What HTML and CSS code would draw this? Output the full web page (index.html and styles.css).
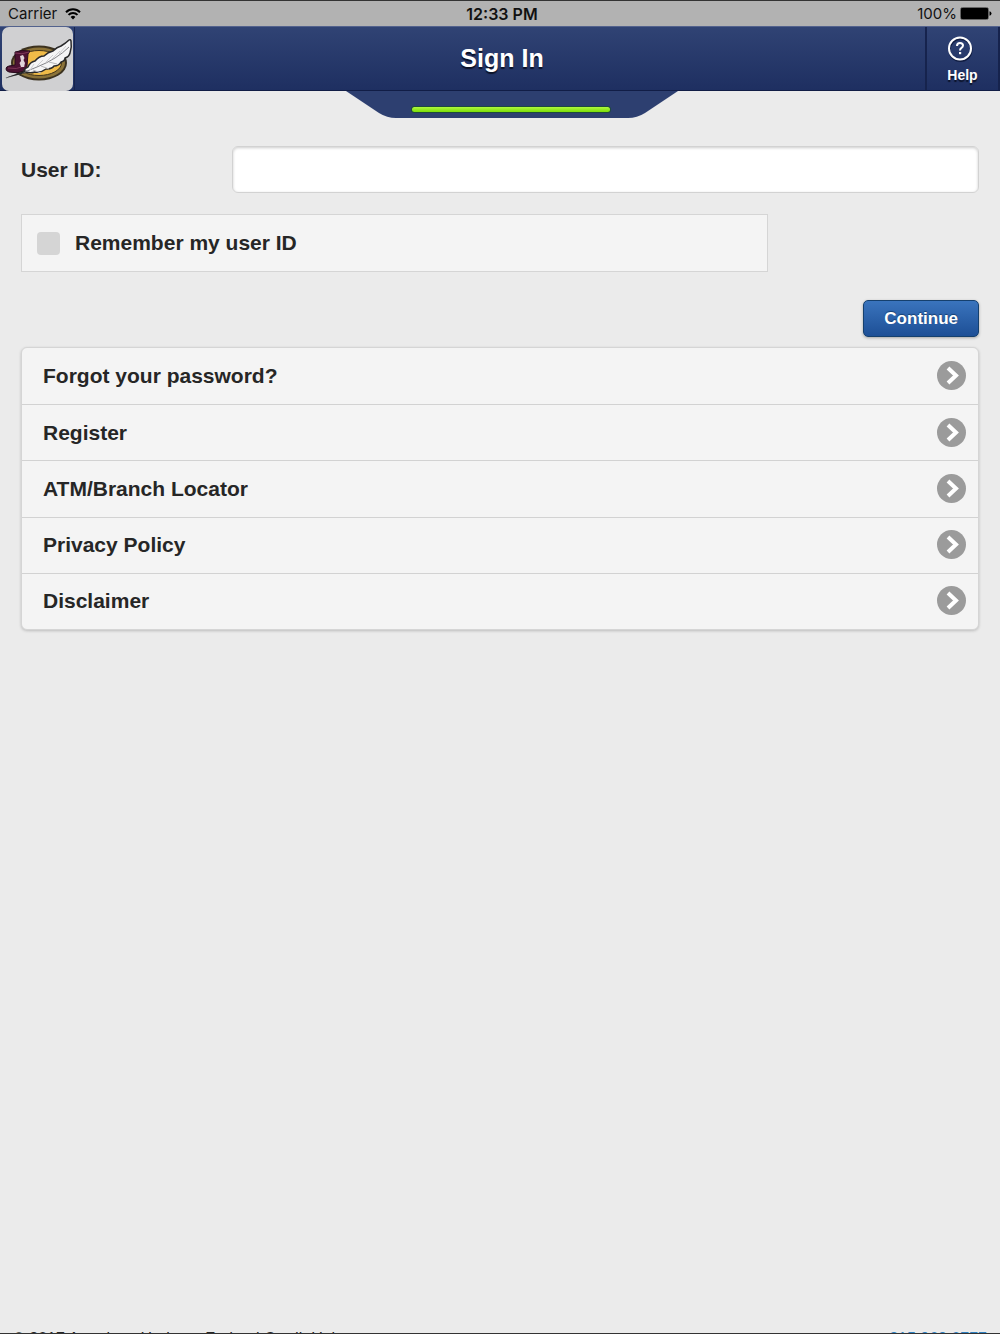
FILE: index.html
```
<!DOCTYPE html>
<html lang="en">
<head>
    <meta charset="UTF-8">
    <meta name="viewport" content="width=device-width, initial-scale=1.0">
    <title>Sign In</title>
    <link rel="stylesheet" href="styles.css">
</head>
<body>

    <div class="status-bar">
        <div class="carrier">
            <span>Carrier</span>
            <svg width="16" height="12" viewBox="0 0 16 12" aria-hidden="true">
                <path d="M1 4.2a10 10 0 0 1 14 0M3.5 6.9a6.4 6.4 0 0 1 9 0" fill="none" stroke="#000" stroke-width="2"/>
                <path d="M5.6 9a3.4 3.4 0 0 1 4.8 0L8 11.5z"/>
            </svg>
        </div>
        <div class="clock">12:33 PM</div>
        <div class="battery">
            <span>100%</span>
            <svg width="32" height="13" viewBox="0 0 32 13" aria-hidden="true">
                <rect x="0.5" y="0.5" width="28" height="12" rx="2" fill="#888" stroke="#666"/>
                <rect x="1" y="1" width="27" height="11" rx="1"/>
                <path d="M29.500 4.200q2 .5 2 2.300t-2 2.300z"/>
            </svg>
        </div>
    </div>

    <header class="header">
        <a class="logo" href="#" aria-label="Home">
            <svg width="71" height="64" viewBox="0 0 71 64" aria-hidden="true">
                <ellipse cx="37" cy="36" rx="28" ry="17.500" fill="#3c3220"/>
                <ellipse cx="37" cy="36" rx="26" ry="15.500" fill="#8c7338"/>
                <ellipse cx="37" cy="36" rx="22.500" ry="12.500" fill="#f0bb48" stroke="#43351b"/>
                <path d="M13 25q7-2.500 15-1l-2 3-1 12-2 5q-8 3-16 1-3-1-3-3 0-2.500 3-3l6-1v-10z" fill="#4b1232" stroke="#270b1c"/>
                <path d="M13 26q7 2 14-1M6 41q8 2 17-2" fill="none" stroke="#7e3658"/>
                <path d="M18 29l3-1 1.500 3-1 2 1.500 3-1 4h-3l-1.500-4 1.500-2z" fill="#e0d3da"/>
                <path d="M22 46q-1-4 4-6 2-5 7-6 4-5 9-5 4-4 9-5 4-4 8-5 5-3 8-6 1.500-1 2 1 1 6-1 12-1 4-5 5 0 3-4 4-2 4-7 4-2 3-8 3-5 4-11 3-6 2-11-1z" fill="#f5f5f6" stroke="#29292b" stroke-width="1.500" stroke-linejoin="round"/>
                <path d="M4 51q18-5 31-11 20-8 32-20" fill="none" stroke="#858589"/>
                <path d="M28 43l4-6M34 40l7-7M43 36l8-8M50 32l8-8M57 27l7-8" fill="none" stroke="#cfcfd2"/>
                <path d="M31 43l8 3M39 39l8 3M47 35l8 2" fill="none" stroke="#b5b5b8"/>
                <path d="M3 51l22-8-5 4z" fill="#242426"/>
            </svg>
        </a>
        <h1 class="title">Sign In</h1>
        <button class="help" type="button">
            <svg width="32" height="26" viewBox="0 0 32 26" aria-hidden="true">
                <circle cx="13.500" cy="14" r="11" fill="none" stroke="#101c42" stroke-width="2"/>
                <circle cx="13" cy="12.500" r="11" fill="none" stroke="#fff" stroke-width="2"/>
                <path d="M10 10q0-3 3-3t3 2.600q0 1.400-1.500 2.300T13 14.500" fill="none" stroke="#fff" stroke-width="2"/>
                <rect x="12" y="16" width="2.200" height="2.200" fill="#fff"/>
            </svg>
            <span>Help</span>
        </button>
    </header>

    <div class="tab">
        <svg width="332" height="27" viewBox="0 0 332 27" aria-hidden="true">
            <defs>
                <linearGradient id="green" x2="0" y2="1">
                    <stop offset="0" stop-color="#b0fa3c"/>
                    <stop offset="1" stop-color="#79dc08"/>
                </linearGradient>
            </defs>
            <path d="M0 0h332l-33 22q-8 5-17 5H50q-9 0-17-5z" fill="#2d3f70"/>
            <rect x="65" y="15" width="200" height="7" rx="3.500" fill="#1d4b3d"/>
            <rect x="66" y="16" width="198" height="5" rx="2.500" fill="url(#green)"/>
        </svg>
    </div>

    <main class="content">
        <form class="sign-in">
            <div class="field">
                <label for="userId">User ID:</label>
                <input type="text" id="userId">
            </div>
            <label class="remember" for="remember">
                <input type="checkbox" id="remember">
                <span>Remember my user ID</span>
            </label>
            <button class="continue" type="submit">Continue</button>
        </form>

        <nav class="links">
            <a href="#">Forgot your password?
                <svg width="30" height="30" viewBox="0 0 30 30" aria-hidden="true"><circle cx="14.500" cy="14.500" r="14.500"/><path d="M11 7l8 7.500-8 7.500"/></svg>
            </a>
            <a href="#">Register
                <svg width="30" height="30" viewBox="0 0 30 30" aria-hidden="true"><circle cx="14.500" cy="14.500" r="14.500"/><path d="M11 7l8 7.500-8 7.500"/></svg>
            </a>
            <a href="#">ATM/Branch Locator
                <svg width="30" height="30" viewBox="0 0 30 30" aria-hidden="true"><circle cx="14.500" cy="14.500" r="14.500"/><path d="M11 7l8 7.500-8 7.500"/></svg>
            </a>
            <a href="#">Privacy Policy
                <svg width="30" height="30" viewBox="0 0 30 30" aria-hidden="true"><circle cx="14.500" cy="14.500" r="14.500"/><path d="M11 7l8 7.500-8 7.500"/></svg>
            </a>
            <a href="#">Disclaimer
                <svg width="30" height="30" viewBox="0 0 30 30" aria-hidden="true"><circle cx="14.500" cy="14.500" r="14.500"/><path d="M11 7l8 7.500-8 7.500"/></svg>
            </a>
        </nav>
    </main>

    <footer class="footer">
        <span>© 2017 American Heritage Federal Credit Union</span>
        <a href="tel:2159690777">215.969.0777</a>
    </footer>

</body>
</html>
```
FILE: styles.css
```
* {
    box-sizing: border-box;
}
body {
    margin: 0;
    height: 100vh;
    overflow: hidden;
    display: flex;
    flex-direction: column;
    border-top: 1px solid #333;
    border-bottom: 1px solid #333;
    background-color: #ebebeb;
    color: #262626;
    font-family: "Liberation Sans", Arial, sans-serif;
    font-size: 21px;
}
svg {
    display: block;
    flex: none;
}

/* status bar */
.status-bar {
    display: grid;
    grid-template-columns: 1fr auto 1fr;
    align-items: center;
    height: 25px;
    padding: 0 8px;
    background-color: #b2b2b2;
    color: #111;
    font-family: Inter, Roboto, sans-serif;
    font-size: 15px;
}
.carrier, .battery {
    display: flex;
    align-items: center;
    gap: 8px;
}
.battery {
    justify-content: flex-end;
    gap: 3px;
}
.clock {
    padding-left: 4px;
    font-size: 16px;
    font-weight: 600;
}

/* header */
.header {
    display: flex;
    height: 65px;
    flex: none;
    border-top: 1px solid #53628d;
    border-bottom: 1px solid #111d46;
    background: linear-gradient(#304374, #1e2f61);
    color: white;
    text-shadow: 0 2px 1px #0b1227;
}
.logo {
    width: 75px;
    padding-left: 2px;
    border-right: 1px solid #16234d;
}
.logo svg {
    background-color: #d0d0d2;
    border-radius: 7px;
}
.title {
    flex: 1;
    margin: 0;
    padding-left: 4px;
    font-size: 25px;
    line-height: 62px;
    text-align: center;
}
.help {
    display: flex;
    flex-direction: column;
    align-items: center;
    gap: 5px;
    width: 75px;
    padding: 9px 0 0;
    border: none;
    border-left: 2px solid #16234d;
    border-right: 2px solid #16234d;
    background: none;
    color: inherit;
    font: bold 14px/16px "Liberation Sans", Arial, sans-serif;
    text-shadow: inherit;
    cursor: pointer;
}
.tab {
    display: flex;
    justify-content: center;
    padding-left: 24px;
}

/* form and links */
.content {
    flex: 1;
    padding: 28px 21px 0;
    font-weight: bold;
}
.sign-in {
    display: flex;
    flex-direction: column;
}
.field {
    display: grid;
    grid-template-columns: 22% 78%;
    align-items: center;
}
.field input {
    width: 100%;
    height: 47px;
    padding: 8px;
    border: 1px solid #d2d2d2;
    border-radius: 6px;
    background-color: white;
    box-shadow: inset 0 1px 3px rgba(0, 0, 0, 0.2);
    font: inherit;
}
.remember {
    display: flex;
    align-items: center;
    gap: 15px;
    width: 78%;
    height: 58px;
    margin-top: 21px;
    padding: 0 15px;
    border: 1px solid #d5d5d5;
    background-color: #f4f4f4;
}
.remember input {
    appearance: none;
    width: 23px;
    height: 23px;
    margin: 0;
    border-radius: 4px;
    background-color: #d5d5d5;
}
.remember input:checked {
    background-color: #2a62a8;
}
.continue {
    align-self: flex-end;
    height: 37px;
    margin: 28px 0 10px;
    padding: 0 20px;
    border: 1px solid #15406e;
    border-radius: 5px;
    background: linear-gradient(#3a74bd, #1d4f96);
    box-shadow: 0 1px 3px rgba(0, 0, 0, 0.3);
    color: white;
    font: bold 17px "Liberation Sans", Arial, sans-serif;
    text-shadow: 0 -1px 1px #163f72;
    cursor: pointer;
}
.links {
    display: grid;
    grid-auto-rows: 1fr;
    height: 283px;
    border: 1px solid #d5d5d5;
    border-radius: 6px;
    background-color: #f4f4f4;
    box-shadow: 0 1px 3px rgba(0, 0, 0, 0.2);
}
.links a {
    display: flex;
    align-items: center;
    justify-content: space-between;
    padding: 0 11px 0 21px;
    color: inherit;
    text-decoration: none;
}
.links a + a {
    border-top: 1px solid #d2d2d2;
}
.links circle {
    fill: #9b9b9b;
}
.links path {
    fill: none;
    stroke: white;
    stroke-width: 4;
}

/* only the top of the footer shows above the fold */
.footer {
    display: flex;
    justify-content: space-between;
    height: 2px;
    padding: 0 13px;
    font-size: 16px;
    line-height: 16px;
}
.footer a {
    color: #2f7fbf;
    text-decoration: none;
}
```
